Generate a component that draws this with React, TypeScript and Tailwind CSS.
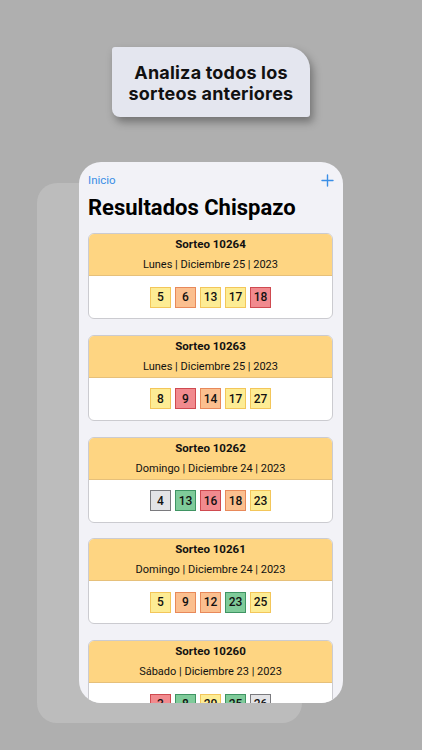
import React from "react";

type C = "y" | "o" | "r" | "g" | "n";
const boxCls: Record<C, string> = {
  y: "bg-[#fdec94] border-[#f3c65a]",
  o: "bg-[#fbbf8f] border-[#e8895a]",
  r: "bg-[#f18a8e] border-[#cf4a50]",
  g: "bg-[#7fcb9a] border-[#3f9463]",
  n: "bg-[#e3e3e6] border-[#7a7a7e]",
};

const cards: { id: string; date: string; nums: [string, C][] }[] = [
  { id: "10264", date: "Lunes | Diciembre 25 | 2023", nums: [["5", "y"], ["6", "o"], ["13", "y"], ["17", "y"], ["18", "r"]] },
  { id: "10263", date: "Lunes | Diciembre 25 | 2023", nums: [["8", "y"], ["9", "r"], ["14", "o"], ["17", "y"], ["27", "y"]] },
  { id: "10262", date: "Domingo | Diciembre 24 | 2023", nums: [["4", "n"], ["13", "g"], ["16", "r"], ["18", "o"], ["23", "y"]] },
  { id: "10261", date: "Domingo | Diciembre 24 | 2023", nums: [["5", "y"], ["9", "o"], ["12", "o"], ["23", "g"], ["25", "y"]] },
  { id: "10260", date: "Sábado | Diciembre 23 | 2023", nums: [["3", "r"], ["8", "g"], ["20", "y"], ["25", "g"], ["26", "n"]] },
];

export default function App() {
  return (
    <div
      className="relative w-[422px] h-[750px] overflow-hidden bg-[#afafaf] flex flex-col"
      style={{ fontFamily: "Roboto, 'Noto Sans', 'Liberation Sans', sans-serif" }}
    >
      <div className="absolute left-[37px] top-[183px] w-[265px] h-[540px] rounded-[20px] bg-[#bcbcbc]" />
      <div
        className="relative mt-[47px] ml-[112px] w-[198px] h-[70px] bg-[#e4e6ef] rounded-tl-[3px] rounded-tr-[22px] rounded-bl-[8px] rounded-br-[3px] shadow-[3px_5px_8px_rgba(0,0,0,0.35)] flex flex-col items-center justify-center text-[18px] leading-[21px] font-bold text-[#111] tracking-[0.2px] pt-[2px]"
        style={{ fontFamily: "Inter, 'Noto Sans', sans-serif" }}
      >
        <span>Analiza todos los</span>
        <span>sorteos anteriores</span>
      </div>
      <div className="relative mt-[45px] ml-[79px] w-[264px] h-[541px] rounded-[22px] bg-[#f2f2f7] overflow-hidden pl-[9px] pr-[10px] flex flex-col">
        <div className="flex items-center justify-between mt-[11px] h-[15px]">
          <span className="text-[11.5px] text-[#3a8ee6]">Inicio</span>
          <svg width="13" height="13" viewBox="0 0 13 13" className="mr-[-1px]">
            <path d="M6.5 1v11M1 6.5h11" stroke="#3a8ee6" strokeWidth="1.4" strokeLinecap="round" />
          </svg>
        </div>
        <div className="mt-[6px] text-[22px] leading-[28px] font-bold text-black">Resultados Chispazo</div>
        <div className="mt-[11px] flex flex-col gap-[15.75px]">
          {cards.map((c) => (
            <div key={c.id} className="rounded-[6px] border border-[#cbcbd0] overflow-hidden bg-white shrink-0">
              <div className="h-[42px] bg-[#fed582] border-b border-[#e6c07a] flex flex-col items-center justify-center text-[#111]">
                <span className="text-[11.5px] leading-[14px] font-bold">Sorteo {c.id}</span>
                <span className="text-[11px] leading-[14px] mt-[7px]">{c.date}</span>
              </div>
              <div className="h-[42px] flex items-center justify-center gap-[4px]">
                {c.nums.map(([n, col], i) => (
                  <div
                    key={i}
                    className={`w-[21px] h-[21px] border-[1.5px] flex items-center justify-center text-[12px] font-medium text-[#111] ${boxCls[col]}`}
                  >
                    {n}
                  </div>
                ))}
              </div>
            </div>
          ))}
        </div>
      </div>
    </div>
  );
}
